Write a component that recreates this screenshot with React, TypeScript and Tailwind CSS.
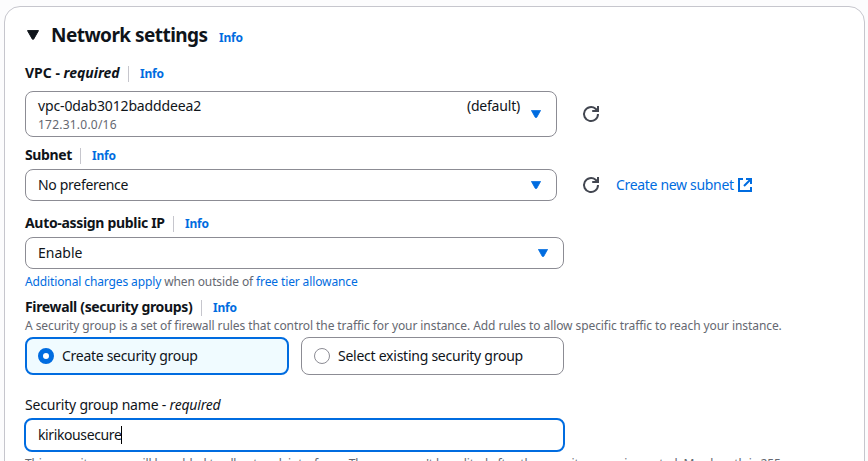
import type { ReactNode } from "react";

function Caret() {
  return (
    <svg width="10" height="8" viewBox="0 0 10 8" className="block shrink-0 text-[#006ce0]">
      <path d="M0.4 0.4h9.2L5.7 7.4H4.3z" fill="currentColor" stroke="currentColor" strokeWidth="0.8" strokeLinejoin="round" />
    </svg>
  );
}

function Refresh() {
  return (
    <svg width="18" height="18" viewBox="0 0 18 18" className="block shrink-0" fill="none" stroke="#424650" strokeWidth="2">
      <path d="M16 9A7 7 0 1 1 13.6 3.8L16 6" />
      <path d="M16 1v5h-5.8" />
    </svg>
  );
}

function External() {
  return (
    <svg width="14" height="14" viewBox="0 0 14 14" className="block shrink-0" fill="none" stroke="#006ce0" strokeWidth="2">
      <path d="M5 1H1v12h12V9" />
      <path d="M8 1h5v5M13 1L6 8" />
    </svg>
  );
}

function FieldLabel({ children, info = true, className }: { children: ReactNode; info?: boolean; className: string }) {
  return (
    <div className={"flex h-[18px] items-center whitespace-nowrap text-[14px] leading-[18px] " + className}>
      {children}
      {info && (
        <>
          <span className="ml-2 h-4 w-px bg-[#c6c6cd]" />
          <a className="ml-[11px] text-[12px] font-bold tracking-[-0.2px] text-[#006ce0]">Info</a>
        </>
      )}
    </div>
  );
}

export default function App() {
  return (
    <div className="h-[461px] w-[868px] overflow-hidden bg-[#fcfcfd] pl-1 pt-1.5 font-['Noto_Sans',sans-serif] text-[#0f141a]">
      <main className="h-[520px] w-[861px] rounded-2xl border border-[#c6c6cd] bg-white pl-5 pt-[13px]">
        <header className="flex h-[30px] items-center whitespace-nowrap pl-0.5">
          <svg width="12" height="10" viewBox="0 0 12 10" className="block">
            <path d="M0.5 0.6h11L6.6 9.2H5.4z" fill="#0f141a" stroke="#0f141a" strokeLinejoin="round" />
          </svg>
          <h2 className="ml-3 w-[156px] text-[19px] font-bold leading-[30px] tracking-[-0.55px]">Network settings</h2>
          <a className="ml-3 mt-1.5 text-[12px] font-bold tracking-[-0.2px] text-[#006ce0]">Info</a>
        </header>

        <FieldLabel className="mt-[15px]">
          <span className="w-[95px] pb-0.5 font-bold">VPC - <em>required</em></span>
        </FieldLabel>
        <div className="mt-2 flex h-[46px] items-center">
          <div className="flex h-[46px] w-[532px] items-center rounded-lg border border-[#8c8c94] pl-3 pr-[15px]">
            <div className="flex-1 pt-0.5">
              <div className="flex h-[19px] justify-between pr-[11px] text-[14px] leading-[18px]">
                <span className="tracking-[-0.14px]">vpc-0dab3012badddeea2</span>
                <span className="tracking-[-0.2px]">(default)</span>
              </div>
              <div className="h-[18px] text-[12px] leading-[18px] tracking-[0.22px] text-[#656871]">172.31.0.0/16</div>
            </div>
            <Caret />
          </div>
          <div className="ml-[25px]"><Refresh /></div>
        </div>

        <FieldLabel className="mt-[10px]">
          <span className="w-[47px] pb-0.5 font-bold tracking-[-0.37px]">Subnet</span>
        </FieldLabel>
        <div className="mt-1 flex h-8 items-center">
          <div className="flex h-8 w-[532px] items-center justify-between rounded-lg border border-[#8c8c94] pl-3 pr-[15px] text-[14px]">
            <span className="pb-0.5 tracking-[-0.31px]">No preference</span>
            <Caret />
          </div>
          <div className="ml-[25px]"><Refresh /></div>
          <a className="ml-[16px] flex items-center whitespace-nowrap text-[14px] text-[#006ce0]">
            <span className="w-[122px] pb-0.5 tracking-[-0.32px]">Create new subnet</span>
            <External />
          </a>
        </div>

        <FieldLabel className="mt-[14px]">
          <span className="w-[140px] pb-0.5 font-bold tracking-[-0.32px]">Auto-assign public IP</span>
        </FieldLabel>
        <div className="mt-1 flex h-8 w-[539px] items-center justify-between rounded-lg border border-[#8c8c94] pl-3 pr-[15px] text-[14px]">
          <span className="pb-0.5">Enable</span>
          <Caret />
        </div>
        <p className="mt-1 h-[18px] whitespace-nowrap text-[12px] leading-[18px] tracking-[-0.12px] text-[#656871]">
          <a className="text-[#006ce0]">Additional charges apply</a> when outside of <a className="text-[#006ce0]">free tier allowance</a>
        </p>

        <FieldLabel className="mt-2">
          <span className="w-[168px] pb-0.5 font-bold tracking-[-0.34px]">Firewall (security groups)</span>
        </FieldLabel>
        <p className="h-[18px] whitespace-nowrap text-[12px] leading-[18px] tracking-[-0.08px] text-[#656871]">
          A security group is a set of firewall rules that control the traffic for your instance. Add rules to allow specific traffic to reach your instance.
        </p>
        <div className="mt-0.5 flex h-[38px] gap-3 whitespace-nowrap text-[14px]">
          <div className="flex w-[264px] items-center rounded-lg border-2 border-[#006ce0] bg-[#f0fbff] pl-[11px]">
            <span className="size-4 rounded-full border-5 border-[#006ce0] bg-white" />
            <span className="ml-2 pb-0.5 tracking-[-0.29px]">Create security group</span>
          </div>
          <div className="flex w-[263px] items-center rounded-lg border border-[#8c8c94] pl-3">
            <span className="size-4 rounded-full border border-[#8c8c94] bg-white" />
            <span className="ml-2 pb-0.5 tracking-[-0.25px]">Select existing security group</span>
          </div>
        </div>

        <FieldLabel className="mt-[21px]" info={false}>
          <span className="tracking-[-0.2px]">Security group name - <em>required</em></span>
        </FieldLabel>
        <div className="-ml-px mt-1 flex h-[34px] w-[541px] items-center rounded-lg border-2 border-[#006ce0] pl-3 text-[14px]">
          <span className="pb-0.5 tracking-[-0.39px]">kirikousecure</span>
          <span className="h-[18px] w-px bg-black" />
        </div>
        <p className="mt-[3px] h-[18px] whitespace-nowrap text-[12px] leading-[18px] tracking-[-0.12px] text-[#656871]">
          This security group will be added to all network interfaces. The name can't be edited after the security group is created. Max length is 255
        </p>
      </main>
    </div>
  );
}
